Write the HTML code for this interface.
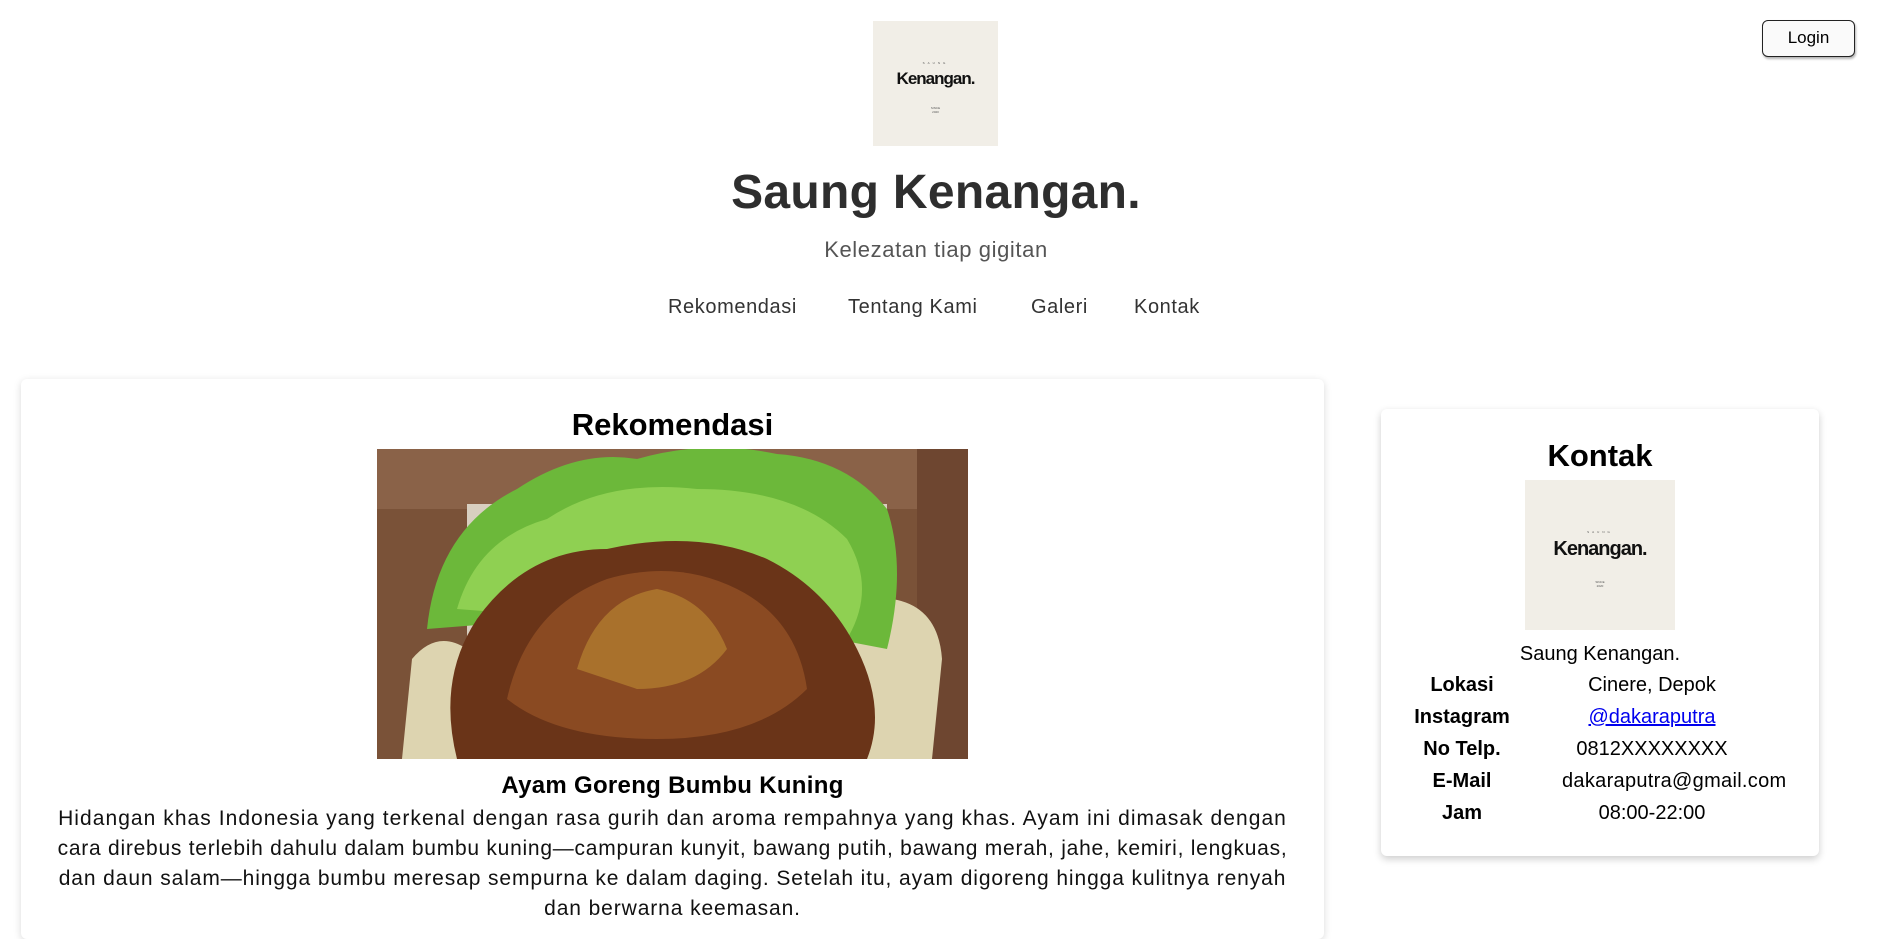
<!DOCTYPE html>
<html><head><meta charset="utf-8"><style>
*{margin:0;padding:0;box-sizing:border-box}
body{width:1877px;height:914px;overflow:hidden;background:#fff;font-family:"Liberation Sans",sans-serif;color:#000;position:relative}
.abs{position:absolute}
.logo{background:#f1eee7;position:absolute}
.logo .s{position:absolute;width:100%;text-align:center;font-size:3px;letter-spacing:3px;color:#555}
.logo .k{position:absolute;width:100%;text-align:center;font-weight:bold;color:#111;letter-spacing:-1px}
.logo .y{position:absolute;width:100%;text-align:center;font-size:3px;color:#555}
.c{position:absolute;text-align:center;white-space:nowrap}
.nav{font-size:20px;color:#333;line-height:24px;top:295px;letter-spacing:0.6px}
</style></head><body>
<div class="abs" style="left:1762px;top:20px;width:93px;height:37px;border:1.5px solid #222;border-radius:6px;box-shadow:1px 2px 2px rgba(0,0,0,.3);font-size:17px;text-align:center;line-height:34px;background:#fafafa">Login</div>

<div class="logo" style="left:873px;top:21px;width:125px;height:125px">
<div class="s" style="top:40px">SAUNG</div>
<div class="k" style="top:48px;font-size:17px">Kenangan.</div>
<div class="y" style="top:85px">SINCE<br>2020</div>
</div>

<div class="c" style="left:0;width:1872px;top:164px;font-size:48px;font-weight:bold;color:#2e2e2e;line-height:58px;letter-spacing:0.3px">Saung Kenangan.</div>
<div class="c" style="left:0;width:1872px;top:237px;font-size:22px;color:#555;line-height:26px;letter-spacing:0.6px">Kelezatan tiap gigitan</div>
<div class="c nav" style="left:668px">Rekomendasi</div>
<div class="c nav" style="left:848px">Tentang Kami</div>
<div class="c nav" style="left:1031px">Galeri</div>
<div class="c nav" style="left:1134px">Kontak</div>

<div class="abs" style="left:21px;top:379px;width:1303px;height:560px;background:#fff;border-radius:6px;box-shadow:0 2px 8px rgba(0,0,0,.15)"></div>
<div class="c" style="left:21px;width:1303px;top:407px;font-size:31px;font-weight:bold;line-height:36px">Rekomendasi</div>
<svg class="abs" style="left:377px;top:449px" width="591" height="310" viewBox="0 0 591 310">
<rect width="591" height="310" fill="#7a5238"/>
<rect y="0" width="591" height="60" fill="#8a6248"/>
<rect x="540" y="0" width="51" height="310" fill="#6e4630"/>
<rect x="90" y="55" width="420" height="255" fill="#d8cfc0"/>
<path d="M25 310 L35 210 Q60 180 90 200 L480 150 Q560 140 565 210 L555 310Z" fill="#ddd4b0"/>
<path d="M50 180 Q60 80 140 40 Q200 0 260 10 Q330 -10 400 5 Q470 10 510 60 Q530 120 510 200 L300 160 Z" fill="#6cb83a"/>
<path d="M80 160 Q100 90 170 70 Q230 30 320 40 Q420 40 470 90 Q500 140 470 190 Z" fill="#8fd052"/>
<path d="M80 310 Q60 230 100 170 Q150 100 230 100 Q320 80 390 110 Q450 140 480 200 Q510 260 490 310 Z" fill="#6a3418"/>
<path d="M130 250 Q150 160 230 130 Q300 110 360 140 Q420 170 430 240 Q380 290 280 290 Q180 290 130 250Z" fill="#8a4a22"/>
<path d="M200 220 Q220 150 280 140 Q330 150 350 200 Q320 240 260 240 Z" fill="#b07a30" opacity=".8"/>
</svg>
<div class="c" style="left:21px;width:1303px;top:771px;font-size:24px;font-weight:bold;line-height:30px;letter-spacing:0.3px">Ayam Goreng Bumbu Kuning</div>
<div class="abs" style="left:21px;width:1303px;top:804px;font-size:21px;line-height:30px;text-align:center;color:#111;white-space:nowrap">
<div style="letter-spacing:1.05px">Hidangan khas Indonesia yang terkenal dengan rasa gurih dan aroma rempahnya yang khas. Ayam ini dimasak dengan</div>
<div style="letter-spacing:0.75px">cara direbus terlebih dahulu dalam bumbu kuning—campuran kunyit, bawang putih, bawang merah, jahe, kemiri, lengkuas,</div>
<div style="letter-spacing:0.9px">dan daun salam—hingga bumbu meresap sempurna ke dalam daging. Setelah itu, ayam digoreng hingga kulitnya renyah</div>
<div style="letter-spacing:0.9px">dan berwarna keemasan.</div>
</div>

<div class="abs" style="left:1381px;top:409px;width:438px;height:447px;background:#fff;border-radius:6px;box-shadow:0 3px 8px rgba(0,0,0,.2)"></div>
<div class="c" style="left:1381px;width:438px;top:438px;font-size:31px;font-weight:bold;line-height:36px">Kontak</div>
<div class="logo" style="left:1525px;top:480px;width:150px;height:150px">
<div class="s" style="top:50px">SAUNG</div>
<div class="k" style="top:58px;font-size:20px">Kenangan.</div>
<div class="y" style="top:100px">SINCE<br>2020</div>
</div>
<div class="c" style="left:1381px;width:438px;top:642px;font-size:20px;line-height:24px">Saung Kenangan.</div>
<div class="abs" style="left:1381px;top:669px;width:438px;font-size:20px;line-height:32px">
<div style="position:relative;height:32px"><span class="c" style="left:0;width:162px;font-weight:bold">Lokasi</span><span class="c" style="left:181px;width:180px">Cinere, Depok</span></div>
<div style="position:relative;height:32px"><span class="c" style="left:0;width:162px;font-weight:bold">Instagram</span><span class="c" style="left:181px;width:180px;color:#00e;text-decoration:underline">@dakaraputra</span></div>
<div style="position:relative;height:32px"><span class="c" style="left:0;width:162px;font-weight:bold">No Telp.</span><span class="c" style="left:181px;width:180px">0812XXXXXXXX</span></div>
<div style="position:relative;height:32px"><span class="c" style="left:0;width:162px;font-weight:bold">E-Mail</span><span class="c" style="left:181px;width:180px;letter-spacing:0.3px">dakaraputra@gmail.com</span></div>
<div style="position:relative;height:32px"><span class="c" style="left:0;width:162px;font-weight:bold">Jam</span><span class="c" style="left:181px;width:180px">08:00-22:00</span></div>
</div>
</body></html>
